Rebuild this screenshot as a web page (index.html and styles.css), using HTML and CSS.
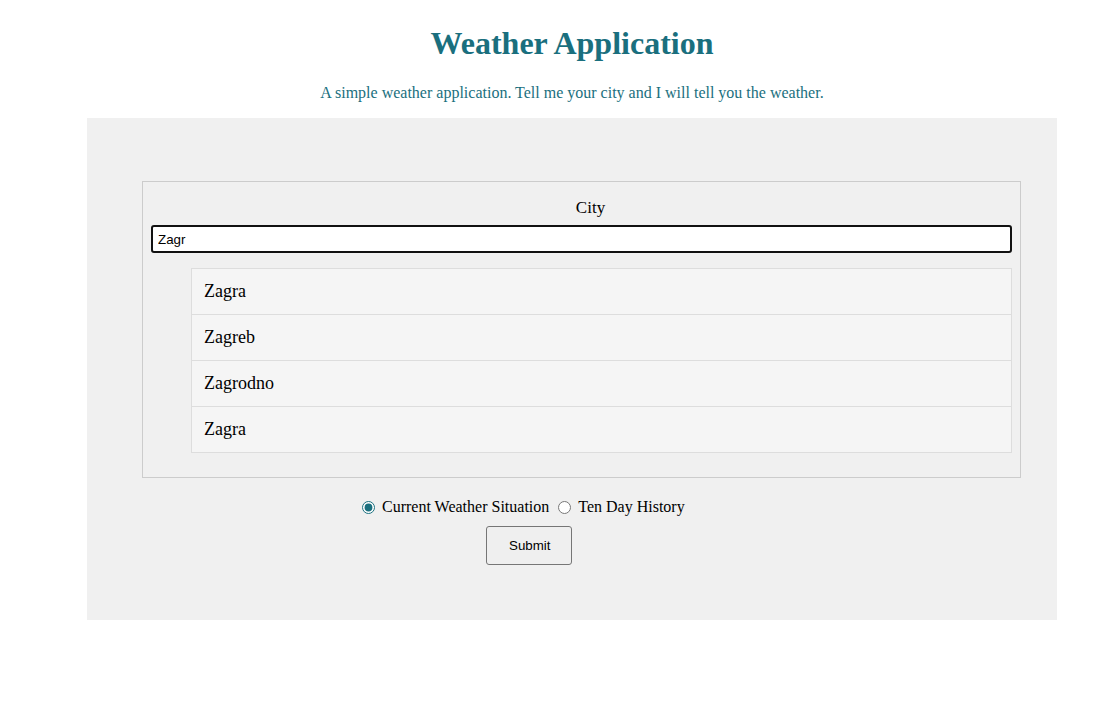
FILE: index.html
```html
<!DOCTYPE html>
<html>
<head>
<meta charset="utf-8">
<title>Weather Application</title>
<link rel="stylesheet" href="styles.css">
</head>
<body>
<div class="page">
  <header class="header">
    <h1 class="title">Weather Application</h1>
    <p class="subtitle">A simple weather application. Tell me your city and I will tell you the weather.</p>
  </header>
  <main class="panel">
    <div class="city-box">
      <label class="city-label" for="city">City</label>
      <input class="city-input" id="city" type="text" value="Zagr">
      <ul class="suggestions">
        <li class="suggestion">Zagra</li>
        <li class="suggestion">Zagreb</li>
        <li class="suggestion">Zagrodno</li>
        <li class="suggestion">Zagra</li>
      </ul>
    </div>
    <div class="options">
      <label class="option"><input class="radio" type="radio" name="mode" checked> Current Weather Situation</label>
      <label class="option"><input class="radio" type="radio" name="mode"> Ten Day History</label>
    </div>
    <div class="actions">
      <button class="submit" type="button">Submit</button>
    </div>
  </main>
</div>
</body>
</html>
```
FILE: styles.css
```css
html, body {
  margin: 0;
  padding: 0;
  background: #ffffff;
}
body {
  font-family: "Liberation Serif", "Times New Roman", serif;
  font-size: 16px;
  color: #000;
}
.page {
  width: 970px;
  margin-left: 87px;
}
.header {
  text-align: center;
  color: #1a6f7e;
}
.title {
  margin: 25px 0 0;
  font-size: 32px;
  line-height: 37px;
  font-weight: bold;
}
.subtitle {
  margin: 22px 0 16px;
  font-size: 16px;
  line-height: 18px;
}
.panel {
  background: #f0f0f0;
  padding: 63px 36px 55px 55px;
}
.city-box {
  border: 1px solid #cccccc;
  padding: 8px;
}
.city-label {
  display: block;
  text-align: center;
  padding: 9px 0 0 18px;
  margin-bottom: 8px;
  line-height: 18px;
  font-size: 17px;
}
.city-input {
  display: block;
  box-sizing: border-box;
  width: 100%;
  height: 28px;
  margin: 0;
  border: 2px solid #111111;
  border-radius: 3px;
  padding: 0 5px;
  background: #ffffff;
  font-family: "Liberation Sans", Arial, sans-serif;
  font-size: 13.33px;
  color: #000;
  outline: none;
}
.suggestions {
  list-style: none;
  margin: 15px 0 16px;
  padding: 0 0 0 40px;
}
.suggestion {
  background: #f5f5f5;
  border: 1px solid #dddddd;
  margin-bottom: -1px;
  height: 45px;
  box-sizing: content-box;
  padding: 0 12px;
  display: flex;
  align-items: center;
  font-size: 18px;
}
.suggestion:last-child {
  margin-bottom: 0;
}
.options {
  display: flex;
  align-items: center;
  padding: 20px 0 0 215px;
  line-height: 18px;
}
.option {
  display: flex;
  align-items: center;
  margin-right: 4px;
}
.radio {
  margin: 0 7px 0 5px;
  width: 13px;
  height: 13px;
  accent-color: #1a6f7e;
}
.actions {
  padding: 10px 0 0 344px;
}
.submit {
  font-family: "Liberation Sans", Arial, sans-serif;
  font-size: 13.33px;
  line-height: 15px;
  padding: 11px 21px 11px 22px;
  border: 1px solid #767676;
  border-radius: 3px;
  background: #efefef;
  color: #000;
}
```
